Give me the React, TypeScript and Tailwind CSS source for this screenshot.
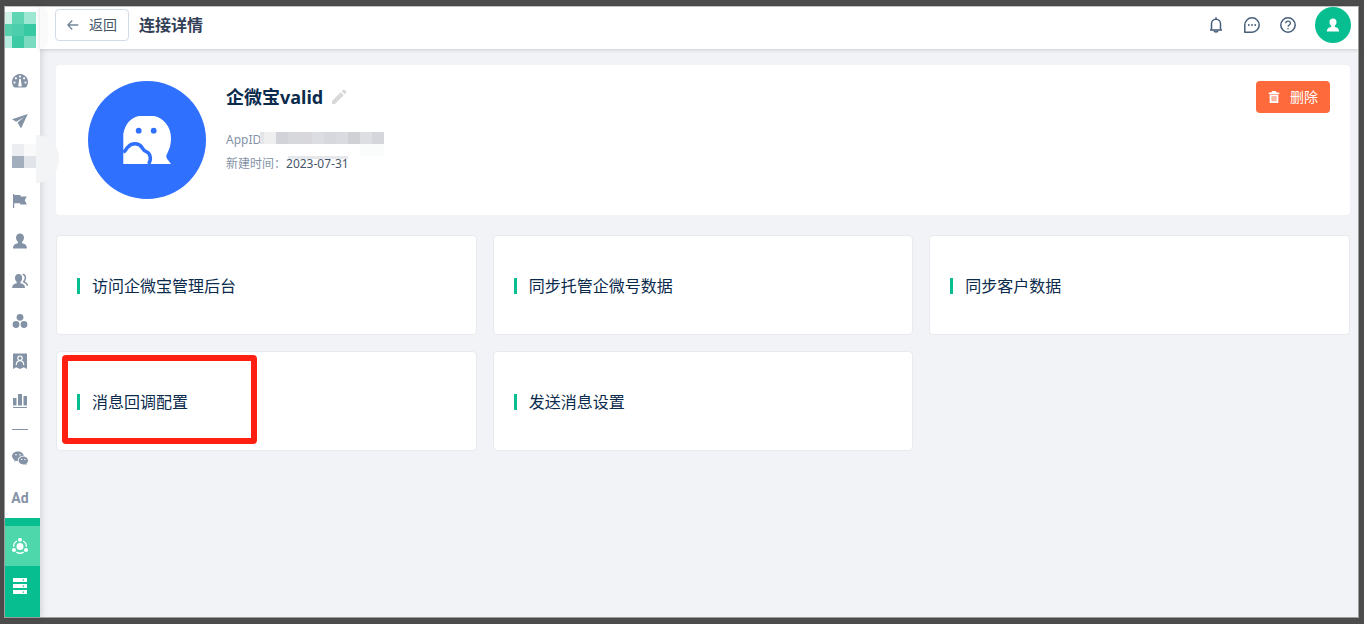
import type { ReactNode } from 'react';

type IconProps = { className?: string };

const Svg = ({ className = 'size-4', children }: { className?: string; children: ReactNode }) => (
  <svg viewBox="0 0 16 16" className={className} fill="currentColor" aria-hidden="true">
    {children}
  </svg>
);

const DashboardIcon = () => (
  <Svg>
    <path
      fillRule="evenodd"
      d="M8 1a8 8 0 0 0-7.2 11.500Q1.300 14.500 3 14.500h10q1.700 0 2.200-2A8 8 0 0 0 8 1Zm0 1.400a1.100 1.100 0 1 1 0 2.200 1.100 1.100 0 0 1 0-2.200ZM3.900 4.200a1.100 1.100 0 1 1 0 2.200 1.100 1.100 0 0 1 0-2.200Zm8.200 0a1.100 1.100 0 1 1 0 2.200 1.100 1.100 0 0 1 0-2.200ZM2.500 8.400a1.100 1.100 0 1 1 0 2.200 1.100 1.100 0 0 1 0-2.200Zm11 0a1.100 1.100 0 1 1 0 2.200 1.100 1.100 0 0 1 0-2.200ZM7.300 5.800h1.400l.8 5.500a1.800 1.800 0 0 1-.3 2.200H6.800a1.800 1.800 0 0 1-.3-2.200Z"
    />
  </Svg>
);

const SendIcon = () => (
  <Svg>
    <path d="M15.800 1 0 6.300l4.200 2.500L12.300 4 5.500 9.500 9 15.500Z" />
  </Svg>
);

const FlagIcon = () => (
  <Svg>
    <path d="M1 1h1.200v1h6.300v1.500h6.300l-2 3.700 2 4.300H8.200V10.300h-6V15H1Z" />
  </Svg>
);

const UserIcon = ({ className }: IconProps) => (
  <Svg className={className}>
    <path d="M8 .5c2.500 0 4 1.700 4 4 0 1.800-.8 3.300-1.900 4.200v1.500c2.800.6 4.900 1.700 4.900 5.300H1c0-3.600 2.100-4.700 4.900-5.300V8.700C4.800 7.800 4 6.300 4 4.500c0-2.300 1.500-4 4-4Z" />
  </Svg>
);

const UsersIcon = () => (
  <Svg>
    <path d="M6.600 1c2.200 0 3.600 1.600 3.600 3.900 0 1.700-.7 3.100-1.700 3.900v1.400c2.600.6 4.500 1.600 4.500 4.800H.2c0-3.200 1.900-4.200 4.500-4.800V8.800C3.700 8 3 6.600 3 4.900 3 2.600 4.400 1 6.600 1Z" />
    <path d="M10.700 1.300c3.200.5 3.500 4.800 1 7.500 1.900.9 3.600 1.800 3.800 4" fill="none" stroke="currentColor" strokeWidth="1.500" />
  </Svg>
);

const ClusterIcon = () => (
  <Svg>
    <circle cx="8" cy="4.300" r="3.400" />
    <circle cx="4" cy="11.500" r="3.400" />
    <circle cx="12" cy="11.500" r="3.400" />
  </Svg>
);

const BadgeIcon = () => (
  <Svg>
    <path d="M1 .5h14v15.500l-3.200-1.700L8 16l-3.800-1.700L1 16Z" />
    <circle cx="8" cy="5.200" r="2.200" fill="none" stroke="white" strokeWidth="1.200" />
    <path d="M4.200 12c.2-2.800 1.600-4.300 3.800-4.300s3.600 1.500 3.800 4.300" fill="none" stroke="white" strokeWidth="1.200" />
  </Svg>
);

const ChartIcon = () => (
  <Svg>
    <path d="M1 5h3.500v7.500H1ZM6 1h4v11.500H6ZM11.500 3H15v9.500h-3.500ZM1 14h14v1H1Z" />
  </Svg>
);

const WechatIcon = () => (
  <Svg>
    <path
      fillRule="evenodd"
      d="M6 1.500c3 0 5.500 1.900 5.800 4.300-3.500-.2-6.200 2-6 5.200-.5 0-1.100-.1-1.700-.3l-2 1.100.6-1.800A5 5 0 0 1 0 6.200C0 3.600 2.700 1.500 6 1.500ZM4 3.900a.8.800 0 1 0 0 1.600.8.800 0 0 0 0-1.600Zm4 0a.8.800 0 1 0 0 1.600.8.800 0 0 0 0-1.600Z"
    />
    <path
      fillRule="evenodd"
      d="M11.300 6.500c2.700 0 4.700 1.800 4.700 4 0 1.300-.7 2.400-1.700 3.100l.4 1.400-1.600-.8c-3.600.8-6.500-1.200-6.500-3.700 0-2.200 2-4 4.700-4ZM9.700 8.700a.7.700 0 1 0 0 1.400.7.700 0 0 0 0-1.400Zm3.200 0a.7.700 0 1 0 0 1.400.7.700 0 0 0 0-1.400Z"
    />
  </Svg>
);

const HubIcon = () => (
  <Svg>
    <circle cx="8" cy="8.500" r="3.500" />
    <circle cx="8" cy="1.800" r="2" />
    <circle cx="2" cy="12" r="2" />
    <circle cx="14" cy="12" r="2" />
    <path
      d="M4.900 3A6.500 6.500 0 0 0 1.600 8.800M11.100 3a6.500 6.500 0 0 1 3.300 5.800M4.400 14.100a6.700 6.700 0 0 0 7.200 0"
      fill="none"
      stroke="currentColor"
      strokeWidth="1.300"
    />
  </Svg>
);

const ServerIcon = () => (
  <Svg>
    <path
      fillRule="evenodd"
      d="M1.500 0h13q.5 0 .5.500v3.500H1V.5q0-.5.500-.5ZM1 6h14v4H1Zm0 6h14v3.500q0 .5-.5.500h-13q-.5 0-.5-.5ZM10.800 1.500v1.200H12V1.500Zm0 6v1.200H12V7.500Zm0 6v1.200H12v-1.200Z"
    />
  </Svg>
);

const BellIcon = () => (
  <Svg>
    <g fill="none" stroke="currentColor" strokeWidth="1.500" strokeLinejoin="round">
      <path d="M3.500 12.500V6.800a4.500 4.500 0 0 1 9 0v5.700M2 12.900h12M8 .3v2" />
      <path d="M6 13.300c.3 2.200 3.700 2.200 4 0" />
    </g>
  </Svg>
);

const ChatIcon = () => (
  <Svg>
    <path d="M.8 15.200V8A7.200 7.200 0 1 1 8 15.200Z" fill="none" stroke="currentColor" strokeWidth="1.500" strokeLinejoin="round" />
    <circle cx="4.800" cy="8" r=".9" />
    <circle cx="8" cy="8" r=".9" />
    <circle cx="11.200" cy="8" r=".9" />
  </Svg>
);

const HelpIcon = () => (
  <Svg>
    <circle cx="8" cy="8" r="7.200" fill="none" stroke="currentColor" strokeWidth="1.500" />
    <path d="M5.700 6.300c0-3 4.700-3 4.700-.1 0 1.700-2.300 1.800-2.300 3.500" fill="none" stroke="currentColor" strokeWidth="1.300" />
    <circle cx="8" cy="11.800" r=".8" />
  </Svg>
);

const ArrowLeftIcon = () => (
  <Svg className="size-3 text-[#73859a]">
    <path d="M15 8H1.500M7 2 1.200 8 7 14" fill="none" stroke="currentColor" strokeWidth="1.800" />
  </Svg>
);

const TrashIcon = () => (
  <Svg className="size-3">
    <path d="M5.500 0h5l1 2H15v2.200H1V2h3.500Z" />
    <path d="M2.200 5h11.600v11H2.200Z" />
    <path d="M4.500 6.800h7v7h-7Z" fill="#fdb6a0" />
  </Svg>
);

const PencilIcon = () => (
  <Svg className="size-4">
    <path d="m1 12 8.700-8.700 3 3L4 15H1Zm9.700-9.700L12.200.8q.7-.6 1.400 0l1.600 1.600q.6.700 0 1.400l-1.500 1.500Z" />
  </Svg>
);

const BrandAvatar = () => (
  <svg viewBox="0 0 118 118" className="size-[118px] shrink-0" role="img" aria-label="企微宝">
    <circle cx="59" cy="59" r="59" fill="#3070ff" />
    <path d="M35.300 83V53C37 43 43 36.500 51 35h15c10 2 17 11 17 22 0 8-2 12-4.500 17-1 3 1.500 4.500 4.500 9Z" fill="white" />
    <circle cx="50.700" cy="49.700" r="2.900" fill="#3070ff" />
    <circle cx="65.700" cy="49.700" r="2.900" fill="#3070ff" />
    <path
      d="M35.300 71C38 70 37.500 68.500 39.500 66.500C43.500 61.500 51 61.800 54 66.500C55.500 69 55.500 69.500 58 70.500C63 72.500 63.500 79 60.500 83"
      fill="none"
      stroke="#3070ff"
      strokeWidth="3.500"
    />
  </svg>
);

const MosaicLogo = () => (
  <svg viewBox="0 0 32 36" className="h-9 w-8" role="img" aria-label="Logo" shapeRendering="crispEdges">
    <path fill="#d0f1e6" d="M0 0h8v12H0z" />
    <path fill="#60d5b4" d="M8 0h12v12H8z" />
    <path fill="#9ee7d2" d="M20 0h12v12H20z" />
    <path fill="#56d0ad" d="M0 12h8v12H0z" />
    <path fill="#4ccdab" d="M8 12h12v12H8z" />
    <path fill="#36c9a2" d="M20 12h12v12H20z" />
    <path fill="#b9eddf" d="M0 24h8v12H0z" />
    <path fill="#3bcaa4" d="M8 24h12v12H8z" />
    <path fill="#7bdbc1" d="M20 24h12v12H20z" />
  </svg>
);

const MosaicIcon = () => (
  <svg viewBox="0 0 24 24" className="mb-2.5 ml-2 size-6" aria-hidden="true" shapeRendering="crispEdges">
    <path fill="#ecedf1" d="M0 0h12v12H0z" />
    <path fill="#f9f9fa" d="M12 0h12v12H12z" />
    <path fill="#a2aebc" d="M0 12h12v12H0z" />
    <path fill="#e1e4e9" d="M12 12h12v12H12z" />
  </svg>
);

const MaskedId = () => (
  <svg viewBox="0 0 124 28" className="absolute top-1 left-[34px] h-7 w-[124px]" aria-hidden="true" shapeRendering="crispEdges">
    <path fill="#e4e5e8" d="M0 0h4v12H0z" />
    <path fill="#efeff0" d="M4 0h12v12H4z" />
    <path fill="#d2d3d8" d="M16 0h12v12H16z" />
    <path fill="#d6d8dc" d="M28 0h12v12H28z" />
    <path fill="#d8d7db" d="M40 0h12v12H40z" />
    <path fill="#dbdde2" d="M52 0h12v12H52z" />
    <path fill="#d6d8dd" d="M64 0h12v12H64z" />
    <path fill="#d9dbe0" d="M76 0h12v12H76z" />
    <path fill="#d0d1d5" d="M88 0h12v12H88z" />
    <path fill="#dcdee2" d="M100 0h12v12h-12z" />
    <path fill="#d4d6db" d="M112 0h12v12h-12z" />
    <path fill="#fafbfb" d="M100 12h24v12h-24z" />
    <path fill="#e6e7ea" d="M28 24h60v3H28z" />
  </svg>
);

const primaryNav = [
  { label: '概览', icon: <DashboardIcon /> },
  { label: '发送', icon: <SendIcon /> },
  { label: '应用', icon: <MosaicIcon /> },
  { label: '旗标', icon: <FlagIcon /> },
  { label: '联系人', icon: <UserIcon /> },
  { label: '群组', icon: <UsersIcon /> },
  { label: '分组', icon: <ClusterIcon /> },
  { label: '名片', icon: <BadgeIcon /> },
  { label: '统计', icon: <ChartIcon /> },
];

const actions = [
  { label: '访问企微宝管理后台' },
  { label: '同步托管企微号数据' },
  { label: '同步客户数据' },
  { label: '消息回调配置', marked: true },
  { label: '发送消息设置' },
];

const NavItem = ({ label, children, className = '' }: { label: string; children: ReactNode; className?: string }) => (
  <a href="#" aria-label={label} className={`flex h-10 shrink-0 items-center justify-center pr-1 ${className}`}>
    {children}
  </a>
);

function Sidebar() {
  return (
    <nav className="relative z-10 flex w-9 shrink-0 flex-col bg-white text-[#8492a6] shadow-[2px_0_6px_rgba(0,0,0,0.12)]">
      <div className="h-[55px] shrink-0 pt-1.5">
        <MosaicLogo />
      </div>
      <div className="relative flex flex-col">
        {primaryNav.map((item) => (
          <NavItem key={item.label} label={item.label}>
            {item.icon}
          </NavItem>
        ))}
        <div className="absolute top-[74px] left-8 h-12 w-[23px] rounded-r-full bg-[#f3f4f6]" />
      </div>
      <div className="flex h-[17px] shrink-0 items-center justify-center pr-1">
        <div className="h-px w-4 bg-[#8492a6]" />
      </div>
      <NavItem label="微信">
        <WechatIcon />
      </NavItem>
      <NavItem label="广告" className="font-['Roboto',sans-serif] text-sm font-bold">
        Ad
      </NavItem>
      <div className="flex flex-1 flex-col bg-[#07be91] pt-2 text-white">
        <NavItem label="连接" className="bg-[#4dd7aa]">
          <HubIcon />
        </NavItem>
        <NavItem label="服务">
          <ServerIcon />
        </NavItem>
      </div>
    </nav>
  );
}

function Header() {
  return (
    <header className="relative z-20 flex h-[43px] shrink-0 items-center justify-between bg-white pr-2 pb-[5px] pl-[15px] shadow-[0_1px_4px_rgba(0,0,0,0.16)]">
      <div className="absolute top-0 left-0 h-[43px] w-2 rounded-r-full bg-[#fafafa]" />
      <div className="flex items-center gap-2.5">
        <button
          type="button"
          className="flex h-8 w-[74px] items-center justify-center gap-2.5 rounded-sm border border-[#d3dce6] bg-white text-sm text-[#475669]"
        >
          <ArrowLeftIcon />
          返回
        </button>
        <h1 className="text-base font-bold text-[#324057]">连接详情</h1>
      </div>
      <div className="flex items-center gap-[19px] text-[#475f7b]">
        <div className="flex items-center gap-5">
          <button type="button" aria-label="通知">
            <BellIcon />
          </button>
          <button type="button" aria-label="消息">
            <ChatIcon />
          </button>
          <button type="button" aria-label="帮助">
            <HelpIcon />
          </button>
        </div>
        <button type="button" aria-label="账号" className="flex size-9 items-center justify-center rounded-full bg-[#07be91] text-white">
          <UserIcon className="size-3.5" />
        </button>
      </div>
    </header>
  );
}

function ProfilePanel() {
  return (
    <section className="flex h-[150px] items-start rounded bg-white pt-4 pr-5 pl-8">
      <BrandAvatar />
      <div className="ml-5 flex-1">
        <div className="flex h-8 items-center gap-2">
          <h2 className="text-lg font-bold text-[#0b2b4d]">企微宝valid</h2>
          <button type="button" aria-label="编辑" className="text-[#d8d8d8]">
            <PencilIcon />
          </button>
        </div>
        <div className="mt-[15px] text-xs leading-6 text-[#8492a6]">
          <p className="relative">
            AppID
            <MaskedId />
          </p>
          <p className="relative">
            新建时间：<span className="text-[#475669]">2023-07-31</span>
          </p>
        </div>
      </div>
      <button
        type="button"
        className="flex h-8 w-[74px] items-center justify-center gap-2.5 rounded-sm bg-[#ff6a3d] text-sm text-white"
      >
        <TrashIcon />
        删除
      </button>
    </section>
  );
}

export default function App() {
  return (
    <div className="relative flex min-h-screen border-t-[6px] border-r-[5px] border-b-[6px] border-l-4 border-[#4c4c4c] bg-[#f2f3f7] font-['Noto_Sans','Noto_Sans_CJK_SC',sans-serif]">
      <Sidebar />
      <div className="flex min-w-0 flex-1 flex-col">
        <Header />
        <main className="flex flex-col gap-5 py-4 pr-[9px] pl-4">
          <ProfilePanel />
          <div className="grid grid-cols-3 gap-4">
            {actions.map((action) => (
              <a
                key={action.label}
                href="#"
                className="relative flex h-[100px] items-center gap-3 rounded border border-[#e8eaed] bg-white px-5 pt-0.5 text-base text-[#0b2b4d]"
              >
                <span className="h-4 w-[3px] bg-[#07be91]" />
                {action.label}
                {action.marked && (
                  <span className="pointer-events-none absolute top-[3px] left-[5px] h-[89px] w-[195px] rounded border-[6px] border-[#ff2012]" />
                )}
              </a>
            ))}
          </div>
        </main>
      </div>
      <div className="pointer-events-none absolute inset-0 z-30 border border-[#9d9d9d] border-t-[#c4c4c4]" />
    </div>
  );
}
